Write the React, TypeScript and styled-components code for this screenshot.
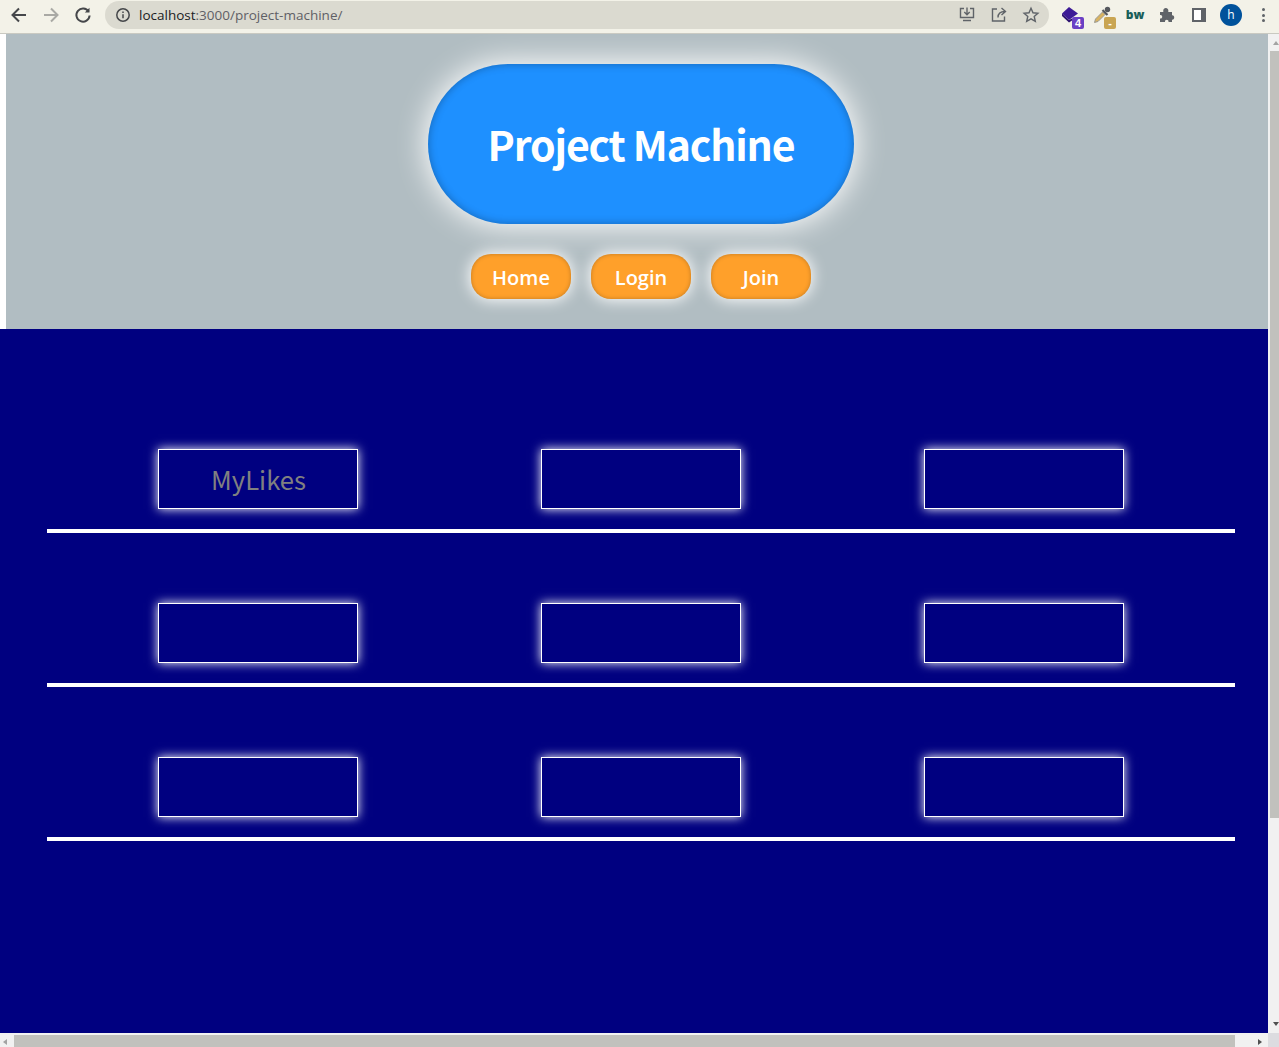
import styled, { createGlobalStyle } from 'styled-components';

const GlobalStyle = createGlobalStyle`
  html, body {
    margin: 0;
    padding: 0;
    overflow: hidden;
    background: #fff;
  }
`;

const rows = [['MyLikes', '', ''], ['', '', ''], ['', '', '']];
const links = ['Home', 'Login', 'Join'];

export default function App() {
  return (
    <Window>
      <GlobalStyle />
      <Toolbar>
        <NavIcon viewBox="0 0 20 20" $color="#45474a">
          <path d="M17 10H4M10 3.500 3.500 10l6.500 6.500" />
        </NavIcon>
        <NavIcon viewBox="0 0 20 20" $color="#a9a9a4">
          <path d="M3 10h13M10 3.500l6.500 6.500-6.500 6.500" />
        </NavIcon>
        <NavIcon viewBox="0 0 20 20" $color="#45474a">
          <path d="M15.600 6.500A6.600 6.600 0 1 0 16.600 10.500" />
          <path d="M16.500 2.800v4.700h-4.700" fill="#45474a" stroke="none" />
        </NavIcon>
        <Omnibox>
          <InfoIcon viewBox="0 0 16 16">
            <circle cx="8" cy="8" r="6.200" />
            <path d="M8 7.200v4M8 4.400v1.500" />
          </InfoIcon>
          <Url>
            <b>localhost</b>:3000/project-machine/
          </Url>
          <OmniActions>
            <ActionIcon viewBox="0 0 18 18">
              <path d="M6 2.500H2.500v9h13v-9H12M9 1.500v7M6.300 6 9 8.700 11.700 6M5 14.500h8" />
            </ActionIcon>
            <ActionIcon viewBox="0 0 18 18">
              <path d="M7 3H2.500v12h12v-4.500M8 11.500c0-4 2.500-6 7-6M11.500 2l4 3.500-4 3.500" />
            </ActionIcon>
            <ActionIcon viewBox="0 0 18 18">
              <path d="m9 2.300 2 4.500 4.900.5-3.700 3.200 1.100 4.800L9 12.800l-4.300 2.500 1.100-4.800-3.700-3.200 4.900-.5z" />
            </ActionIcon>
          </OmniActions>
        </Omnibox>
        <Extensions>
          <ExtensionSlot>
            <ExtensionIcon viewBox="0 0 22 22">
              <path d="M9 3 18 9.500 9 16 2 9.500z" fill="#3d1a96" />
              <path d="M2 9.500v2.500l7 6.500 3-2v-2L9 16z" fill="#2c1270" />
            </ExtensionIcon>
            <Badge $bg="#6a3fc4">4</Badge>
          </ExtensionSlot>
          <ExtensionSlot>
            <ExtensionIcon viewBox="0 0 22 22">
              <path d="M2.500 18.500l1-3.500 7-7 2.500 2.500-7 7z" fill="#d9b35f" stroke="#9a9a94" />
              <circle cx="15.500" cy="5.500" r="2.700" fill="#55585d" />
              <path d="M10.500 6l5 5" stroke="#55585d" strokeWidth="2.200" />
            </ExtensionIcon>
            <Badge $bg="#c9a552">-</Badge>
          </ExtensionSlot>
          <ExtensionSlot>
            <BwMark>bw</BwMark>
          </ExtensionSlot>
          <ExtensionSlot>
            <svg width="16" height="16" viewBox="0 0 16 16" fill="#5f6368">
              <path d="M1 5h3.300C3.800 2 5.300 1 6.800 1s3 1 2.500 4H13v3.200c3-.5 3 5 0 4.500V15H9.500c.5-3-4-3-3.500 0H1v-3.500c3 .5 3-4 0-3.500z" />
            </svg>
          </ExtensionSlot>
          <ExtensionSlot>
            <PanelIcon />
          </ExtensionSlot>
          <ExtensionSlot>
            <Avatar>h</Avatar>
          </ExtensionSlot>
          <MenuDots>
            <i />
            <i />
            <i />
          </MenuDots>
        </Extensions>
      </Toolbar>
      <Viewport>
        <Page>
          <Header>
            <Title>Project Machine</Title>
            <Nav>
              {links.map((link) => (
                <NavButton key={link}>{link}</NavButton>
              ))}
            </Nav>
          </Header>
          <Main>
            {rows.map((row, i) => (
              <Shelf key={i}>
                <ShelfRow>
                  {row.map((label, j) => (
                    <ShelfBox key={j}>{label}</ShelfBox>
                  ))}
                </ShelfRow>
                <Divider />
              </Shelf>
            ))}
          </Main>
        </Page>
        <VerticalBar>
          <ArrowUp />
          <VerticalTrack>
            <VerticalThumb />
          </VerticalTrack>
          <ArrowDown />
        </VerticalBar>
      </Viewport>
      <HorizontalBar>
        <ArrowLeft />
        <HorizontalThumb />
        <ArrowRight />
        <Corner />
      </HorizontalBar>
    </Window>
  );
}

const Window = styled.div`
  width: 1279px;
  height: 1047px;
  display: flex;
  flex-direction: column;
  overflow: hidden;
`;

const Toolbar = styled.div`
  height: 32px;
  flex: none;
  display: flex;
  align-items: flex-start;
  padding: 1px 0 0 9px;
  background: #f3f2e8;
  border-bottom: 1px solid #c9c9c1;
`;

const NavIcon = styled.svg<{ $color: string }>`
  width: 20px;
  height: 20px;
  flex: none;
  margin: 4px 12px 0 0;
  fill: none;
  stroke: ${(p) => p.$color};
  stroke-width: 2;
`;

const Omnibox = styled.div`
  width: 944px;
  height: 28px;
  flex: none;
  display: flex;
  align-items: center;
  padding: 0 9px 0 10px;
  box-sizing: border-box;
  background: #dbdad0;
  border-radius: 14px;
`;

const InfoIcon = styled.svg`
  width: 16px;
  height: 16px;
  flex: none;
  fill: none;
  stroke: #45474a;
  stroke-width: 1.500;
`;

const Url = styled.div`
  margin-left: 8px;
  font: 13.500px "Open Sans", "Liberation Sans", sans-serif;
  color: #5f6066;
  white-space: nowrap;

  b {
    font-weight: 400;
    color: #202124;
  }
`;

const OmniActions = styled.div`
  margin-left: auto;
  display: flex;
  gap: 14px;
`;

const ActionIcon = styled.svg`
  width: 18px;
  height: 18px;
  fill: none;
  stroke: #5f6368;
  stroke-width: 1.400;
`;

const Extensions = styled.div`
  display: flex;
  align-items: center;
  height: 28px;
  margin-left: 6px;
`;

const ExtensionSlot = styled.div`
  position: relative;
  width: 32px;
  height: 28px;
  display: flex;
  align-items: center;
  justify-content: center;
`;

const ExtensionIcon = styled.svg`
  width: 22px;
  height: 22px;
  flex: none;
`;

const Badge = styled.span<{ $bg: string }>`
  position: absolute;
  right: 3px;
  bottom: 0;
  width: 12px;
  height: 12px;
  border-radius: 2px;
  background: ${(p) => p.$bg};
  color: #fff;
  font: bold 11px/12px "Liberation Sans", sans-serif;
  text-align: center;
`;

const BwMark = styled.span`
  font: 800 12px/1 "Open Sans", "Liberation Sans", sans-serif;
  color: #1a5f5a;
`;

const PanelIcon = styled.div`
  width: 7px;
  height: 10px;
  border: 2px solid #5f6368;
  border-right-width: 5px;
  background: #fff;
`;

const Avatar = styled.div`
  width: 22px;
  height: 22px;
  border-radius: 50%;
  background: #00529b;
  color: #fff;
  font: 12px/22px "Open Sans", sans-serif;
  text-align: center;
`;

const MenuDots = styled.div`
  width: 32px;
  height: 14px;
  display: flex;
  flex-direction: column;
  justify-content: space-between;
  align-items: center;

  i {
    width: 3px;
    height: 3px;
    border-radius: 50%;
    background: #5f6368;
  }
`;

const Viewport = styled.div`
  flex: 1;
  min-height: 0;
  display: flex;
`;

const Page = styled.div`
  width: 1268px;
  flex: none;
  display: flex;
  flex-direction: column;
  background: #fff;
`;

const Header = styled.header`
  height: 295px;
  flex: none;
  margin-left: 6px;
  padding: 30px 0 0 8px;
  box-sizing: border-box;
  display: flex;
  flex-direction: column;
  align-items: center;
  background: #b1bdc2;
`;

const Title = styled.h1`
  width: 426px;
  height: 160px;
  margin: 0;
  padding-bottom: 2px;
  box-sizing: border-box;
  display: flex;
  align-items: center;
  justify-content: center;
  border-radius: 80px;
  background: #1e90ff;
  box-shadow: 0 0 30px 2px #fff, inset 0 0 8px rgba(0, 0, 0, 0.3);
  color: #fff;
  font: 700 41px "Noto Sans CJK KR", "Noto Sans", sans-serif;
  letter-spacing: -1.150px;
`;

const Nav = styled.nav`
  display: flex;
  gap: 20px;
  margin-top: 30px;
`;

const NavButton = styled.button`
  width: 100px;
  height: 45px;
  padding: 1px 0 0;
  border: none;
  border-radius: 20px;
  background: #ffa02a;
  box-shadow: 0 0 15px 1px #fff, inset 0 0 4px rgba(0, 0, 0, 0.25);
  color: #fff;
  font: 600 20px "Open Sans", sans-serif;
`;

const Main = styled.main`
  flex: 1;
  padding-top: 120px;
  background: #000080;
`;

const Shelf = styled.section`
  width: 1188px;
  margin: 0 0 70px 47px;
`;

const ShelfRow = styled.div`
  display: grid;
  grid-template-columns: repeat(3, 200px);
  justify-content: center;
  column-gap: 183px;
`;

const ShelfBox = styled.div`
  height: 60px;
  padding: 0 0 1px 1px;
  box-sizing: border-box;
  display: flex;
  align-items: center;
  justify-content: center;
  border: 1px solid #fff;
  box-shadow: 0 0 10px #fff;
  background: #000080;
  color: #808080;
  font: 400 25.600px "Noto Sans CJK KR", "Noto Sans", sans-serif;
`;

const Divider = styled.div`
  height: 4px;
  margin-top: 20px;
  background: #fff;
`;

const VerticalBar = styled.div`
  width: 11px;
  flex: none;
  display: flex;
  flex-direction: column;
  background: #f1f1f1;
`;

const VerticalTrack = styled.div`
  flex: 1;
  padding: 6px 0 0 2px;
`;

const VerticalThumb = styled.div`
  width: 9px;
  height: 767px;
  background: #c1c1bd;
`;

const ArrowUp = styled.div`
  width: 0;
  height: 0;
  margin: 7px 0 0 5px;
  border-left: 3px solid transparent;
  border-right: 3px solid transparent;
  border-bottom: 4px solid #a3a3a3;
`;

const ArrowDown = styled.div`
  width: 0;
  height: 0;
  margin: 0 0 7px 5px;
  border-left: 3px solid transparent;
  border-right: 3px solid transparent;
  border-top: 4px solid #505050;
`;

const HorizontalBar = styled.div`
  height: 14px;
  flex: none;
  display: flex;
  align-items: flex-end;
  background: #f1f1f1;
  position: relative;
`;

const ArrowLeft = styled.div`
  width: 0;
  height: 0;
  margin: 0 7px 2px 3px;
  border-top: 3.500px solid transparent;
  border-bottom: 3.500px solid transparent;
  border-right: 4px solid #a3a3a3;
`;

const HorizontalThumb = styled.div`
  width: 1221px;
  height: 12px;
  background: #c1c1bd;
`;

const ArrowRight = styled.div`
  width: 0;
  height: 0;
  margin: 0 0 2px 23px;
  border-top: 3.500px solid transparent;
  border-bottom: 3.500px solid transparent;
  border-left: 4px solid #505050;
`;

const Corner = styled.div`
  position: absolute;
  right: 0;
  top: 0;
  width: 11px;
  height: 14px;
  background: #dcdce0;
`;
